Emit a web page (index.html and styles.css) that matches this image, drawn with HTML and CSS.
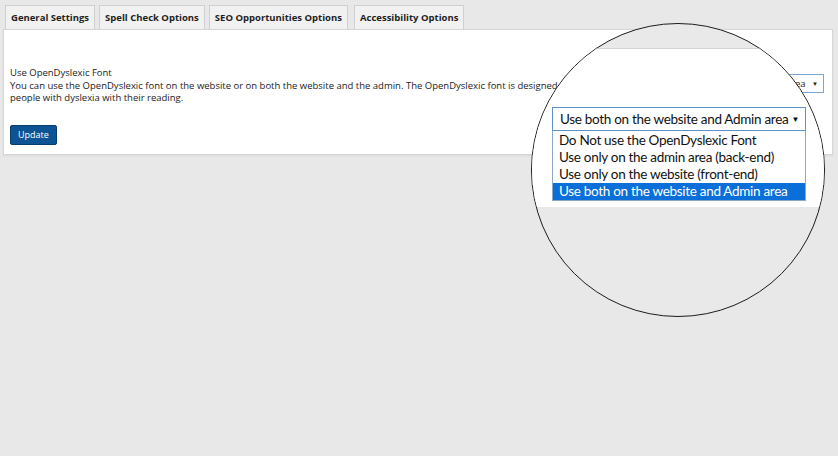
FILE: index.html
```html
<!DOCTYPE html>
<html lang="en">

<head>
    <meta charset="UTF-8">
    <title>Accessibility Options</title>
    <link rel="stylesheet" href="styles.css">
</head>

<body>
    <div class="page">
        <div class="tabs">
            <div class="tab">General Settings</div>
            <div class="tab">Spell Check Options</div>
            <div class="tab">SEO Opportunities Options</div>
            <div class="tab">Accessibility Options</div>
        </div>
        <div class="panel">
            <div class="row">
                <div class="desc">
                    <div>Use OpenDyslexic Font</div>
                    <div>You can use the OpenDyslexic font on the website or on both the website and the admin. The OpenDyslexic font is designed to help people with dyslexia with their reading.</div>
                </div>
                <div class="select">Use both on the website and Admin area <span class="arrow">&#9660;</span></div>
            </div>
            <button class="update">Update</button>
        </div>

        <!-- magnifier over the dropdown -->
        <div class="lens">
            <div class="lens-top"></div>
            <div class="lens-panel">
                <div class="big-select">Use both on the website and Admin area <span class="arrow">&#9660;</span></div>
                <ul class="big-list">
                    <li>Do Not use the OpenDyslexic Font</li>
                    <li>Use only on the admin area (back-end)</li>
                    <li>Use only on the website (front-end)</li>
                    <li class="picked">Use both on the website and Admin area</li>
                </ul>
            </div>
        </div>
    </div>
</body>

</html>
```

FILE: styles.css
```css
* {
    box-sizing: border-box;
    margin: 0;
    padding: 0;
}

body {
    background: #e8e8e8;
    font-family: 'Open Sans', sans-serif;
    color: #222;
}

.page {
    position: relative;
    width: 838px;
    height: 456px;
    padding: 5px 0 0 3px;
}

.tabs {
    display: flex;
    gap: 4px;
    padding-left: 2px;
}

.tab {
    height: 24px;
    padding: 0 5px;
    border: 1px solid #cfcfcf;
    border-bottom: none;
    background: #f1f1f1;
    font-size: 9.5px;
    font-weight: 700;
    line-height: 23px;
    color: #1e1e1e;
    white-space: nowrap;
}

.tab:last-child {
    margin-left: 2px;
}

.panel {
    width: 830px;
    height: 126px;
    background: #fff;
    border: 1px solid #d6d6d6;
    box-shadow: 0 1px 2px rgba(0, 0, 0, 0.06);
    padding: 37px 8px 0 6px;
}

.row {
    display: flex;
    justify-content: space-between;
    align-items: flex-start;
}

.desc {
    width: 640px;
    font-size: 9.5px;
    line-height: 12.5px;
}

.select {
    margin-top: 7px;
    height: 19px;
    padding: 0 5px;
    border: 1px solid #7ba6d4;
    font-size: 9.5px;
    line-height: 17px;
    white-space: nowrap;
}

.select .arrow {
    font-size: 6px;
    margin-left: 4px;
    vertical-align: 1px;
}

.update {
    margin-top: 20px;
    height: 20px;
    padding: 0 7px;
    border: 1px solid #083d6e;
    border-radius: 2px;
    background: #0c5494;
    color: #fff;
    font-family: 'Open Sans', sans-serif;
    font-size: 9px;
}

.lens {
    position: absolute;
    left: 531px;
    top: 23px;
    width: 294px;
    height: 294px;
    border: 1.5px solid #1c1c1c;
    border-radius: 50%;
    overflow: hidden;
    background: #e9e9e9;
    font-family: Lato, sans-serif;
}

.lens-top {
    height: 25px;
    border-bottom: 1px solid #d2d2d2;
}

.lens-panel {
    background: #fff;
    padding: 58px 0 6px 20px;
}

.big-select {
    width: 254px;
    height: 24px;
    padding: 0 6px 0 7px;
    border: 1px solid #5d93cc;
    font-size: 13.5px;
    letter-spacing: -0.3px;
    line-height: 22px;
    color: #111;
    display: flex;
    justify-content: space-between;
    white-space: nowrap;
}

.big-select .arrow {
    font-size: 8px;
}

.big-list {
    list-style: none;
    width: 254px;
    border: 1px solid #8aa9c9;
    border-top: none;
    font-size: 13.5px;
    letter-spacing: -0.3px;
    line-height: 17px;
    color: #111;
    padding-top: 1px;
    white-space: nowrap;
}

.big-list li {
    padding-left: 6px;
}

.big-list .picked {
    background: #0a6fd8;
    color: #fff;
}
```
